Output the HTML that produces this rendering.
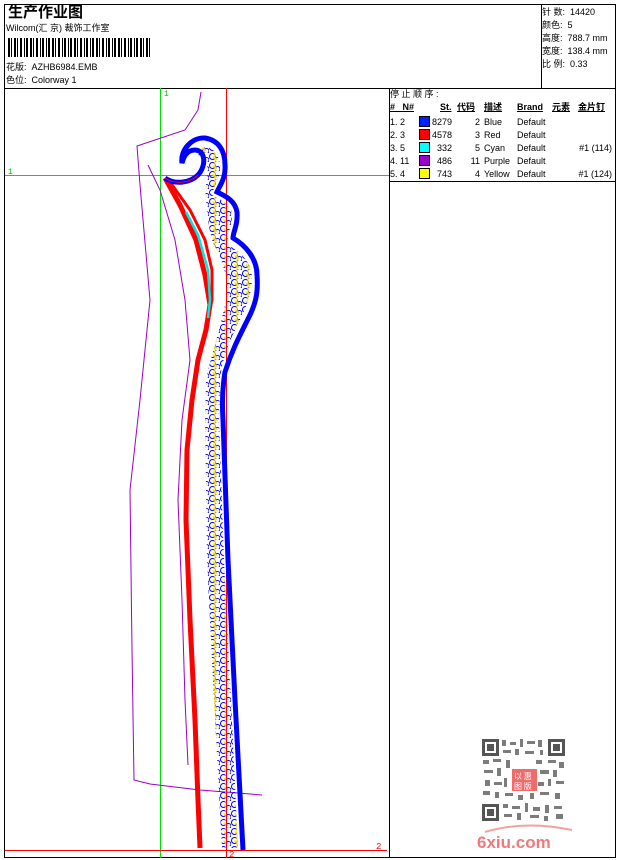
<!DOCTYPE html>
<html><head><meta charset="utf-8"><style>
body{margin:0;background:#fff;width:620px;height:860px;overflow:hidden;font-family:"Liberation Sans","Noto Sans CJK SC",sans-serif;color:#000}
.t{position:absolute;font-size:9px;white-space:nowrap;line-height:11px}
</style></head><body>
<svg width="620" height="860" style="position:absolute;left:0;top:0">
<defs>
<pattern id="lp" x="0" y="0" width="11" height="9" patternUnits="userSpaceOnUse">
<circle cx="3.5" cy="3.5" r="3" fill="none" stroke="#0000ff" stroke-width="1"/>
<circle cx="8.5" cy="7" r="2.5" fill="none" stroke="#0000ff" stroke-width="1"/>
<path d="M3.5,3.5 L8.5,7 M6,0 L6,9" stroke="#ffe600" stroke-width="1.2"/>
</pattern>
</defs>
<rect x="4.5" y="4.5" width="611" height="853" fill="none" stroke="#000"/>
<line x1="4" y1="88.5" x2="616" y2="88.5" stroke="#000"/>
<line x1="541.5" y1="4" x2="541.5" y2="88" stroke="#000"/>
<line x1="389.5" y1="88" x2="389.5" y2="858" stroke="#000"/>
<line x1="389" y1="181.5" x2="616" y2="181.5" stroke="#000"/>
<g fill="#000">
<rect x="8" y="38" width="2" height="19"/><rect x="11" y="38" width="1" height="19"/><rect x="14" y="38" width="2" height="19"/><rect x="17" y="38" width="1" height="19"/><rect x="20" y="38" width="2" height="19"/><rect x="24" y="38" width="1" height="19"/><rect x="26" y="38" width="2" height="19"/><rect x="30" y="38" width="2" height="19"/><rect x="33" y="38" width="1" height="19"/><rect x="36" y="38" width="2" height="19"/><rect x="40" y="38" width="1" height="19"/><rect x="42" y="38" width="2" height="19"/><rect x="46" y="38" width="1" height="19"/><rect x="48" y="38" width="2" height="19"/><rect x="52" y="38" width="2" height="19"/><rect x="55" y="38" width="1" height="19"/><rect x="58" y="38" width="2" height="19"/><rect x="62" y="38" width="1" height="19"/><rect x="64" y="38" width="2" height="19"/><rect x="68" y="38" width="1" height="19"/><rect x="70" y="38" width="2" height="19"/><rect x="74" y="38" width="2" height="19"/><rect x="77" y="38" width="1" height="19"/><rect x="80" y="38" width="2" height="19"/><rect x="84" y="38" width="1" height="19"/><rect x="86" y="38" width="2" height="19"/><rect x="90" y="38" width="1" height="19"/><rect x="92" y="38" width="2" height="19"/><rect x="96" y="38" width="2" height="19"/><rect x="99" y="38" width="1" height="19"/><rect x="102" y="38" width="2" height="19"/><rect x="106" y="38" width="1" height="19"/><rect x="108" y="38" width="2" height="19"/><rect x="112" y="38" width="1" height="19"/><rect x="114" y="38" width="2" height="19"/><rect x="118" y="38" width="2" height="19"/><rect x="121" y="38" width="1" height="19"/><rect x="124" y="38" width="2" height="19"/><rect x="128" y="38" width="1" height="19"/><rect x="130" y="38" width="2" height="19"/><rect x="134" y="38" width="1" height="19"/><rect x="136" y="38" width="2" height="19"/><rect x="140" y="38" width="2" height="19"/><rect x="143" y="38" width="1" height="19"/><rect x="146" y="38" width="2" height="19"/><rect x="149" y="38" width="1" height="19"/>
</g>
<line x1="160.5" y1="88" x2="160.5" y2="858" stroke="#00e000"/>
<line x1="5" y1="175.5" x2="389" y2="175.5" stroke="#00e000"/>
<line x1="5" y1="850.5" x2="387" y2="850.5" stroke="#f00"/>
<text x="164" y="96" font-size="8" fill="#00c000" font-family="Liberation Mono">1</text>
<text x="8" y="174" font-size="8" fill="#00c000" font-family="Liberation Mono">1</text>
<text x="376" y="849" font-size="9" fill="#f00" font-family="Liberation Mono">2</text>
<text x="229" y="857" font-size="9" fill="#f00" font-family="Liberation Mono">2</text>
<path d="M201,92 L198,110 L185,130 L137,146 L140,185 L150,300 L140,400 L130,490 L132,650 L134,780 L150,784 L200,790 L262,795" fill="none" stroke="#9900cc" stroke-width="1"/>
<path d="M148,165 L160,190 L175,240 L185,300 L190,360 L182,420 L178,500 L182,600 L185,700 L188,765" fill="none" stroke="#9900cc" stroke-width="1"/>
<!-- loops fill regions -->
<path d="M195,152 C205,142 218,148 220,165 C221,180 212,190 212,195 C222,200 232,205 232,215 C232,228 226,235 228,245 C240,252 252,262 252,278 C252,295 245,310 236,328 C228,345 222,360 220,380 L219,420 L224,560 L231,700 L238,848 L222,848 L214,700 L207,560 L205,420 L206,380 C210,360 220,330 226,300 C230,280 222,260 214,245 C208,230 208,215 206,200 C204,185 210,172 206,162 Z" fill="url(#lp)"/>
<path d="M165,178 L180,205 L196,240 L205,275 L210,305 L206,330 L198,360 L192,400 L187,450 L186,520 L190,620 L195,720 L198,800 L200,848" fill="none" stroke="#f00" stroke-width="5"/>
<path d="M170,182 L190,210 L205,240 L212,270 L212,300 L208,318" fill="none" stroke="#f00" stroke-width="3"/>
<path d="M186,212 L198,235 L208,270 L210,300 L208,318" fill="none" stroke="#00e5e5" stroke-width="2.5"/>
<line x1="226.5" y1="88" x2="226.5" y2="858" stroke="#f00"/>
<path d="M165,178 C175,185 190,183 198,175 C207,165 205,150 195,150 C185,150 183,160 182,163 C180,150 192,137 205,138 C218,140 225,150 225,165 C226,178 220,185 217,192 C225,196 235,200 237,212 C238,225 233,232 233,238 C245,245 257,258 257,275 C258,290 257,300 250,315 C240,335 232,350 225,372 C222,390 222,405 223,420 L228,560 L235,700 L243,850" fill="none" stroke="#0000ff" stroke-width="5"/>
<path d="M165,178 C175,185 190,183 198,175" fill="none" stroke="#f00" stroke-width="1"/>
<!-- QR -->
<g fill="#555">
<rect x="482" y="739" width="17" height="17"/><rect x="548" y="739" width="17" height="17"/><rect x="482" y="804" width="17" height="17"/>
</g>
<g fill="#fff"><rect x="485" y="742" width="11" height="11"/><rect x="551" y="742" width="11" height="11"/><rect x="485" y="807" width="11" height="11"/></g>
<g fill="#555"><rect x="487" y="744" width="7" height="7"/><rect x="553" y="744" width="7" height="7"/><rect x="487" y="809" width="7" height="7"/></g>
<g fill="#666" opacity="0.85">
<rect x="502" y="740" width="4" height="6"/><rect x="510" y="742" width="6" height="3"/><rect x="520" y="739" width="3" height="8"/><rect x="527" y="741" width="8" height="3"/><rect x="538" y="740" width="4" height="7"/>
<rect x="503" y="750" width="8" height="3"/><rect x="515" y="749" width="4" height="6"/><rect x="525" y="751" width="9" height="3"/><rect x="540" y="750" width="3" height="5"/>
<rect x="483" y="760" width="6" height="4"/><rect x="493" y="759" width="8" height="3"/><rect x="506" y="760" width="4" height="8"/><rect x="536" y="760" width="6" height="4"/><rect x="548" y="760" width="8" height="3"/><rect x="559" y="762" width="5" height="6"/>
<rect x="484" y="770" width="9" height="3"/><rect x="497" y="768" width="4" height="8"/><rect x="540" y="770" width="9" height="4"/><rect x="553" y="770" width="4" height="7"/>
<rect x="485" y="780" width="5" height="6"/><rect x="494" y="782" width="8" height="3"/><rect x="504" y="778" width="3" height="9"/><rect x="538" y="782" width="6" height="4"/><rect x="548" y="779" width="3" height="7"/><rect x="556" y="781" width="8" height="3"/>
<rect x="483" y="791" width="7" height="4"/><rect x="495" y="792" width="4" height="6"/><rect x="505" y="793" width="8" height="3"/><rect x="518" y="795" width="5" height="5"/><rect x="530" y="793" width="4" height="6"/><rect x="540" y="792" width="9" height="3"/><rect x="555" y="793" width="5" height="6"/>
<rect x="503" y="804" width="5" height="4"/><rect x="512" y="806" width="8" height="3"/><rect x="525" y="803" width="3" height="9"/><rect x="533" y="807" width="7" height="4"/><rect x="545" y="805" width="4" height="8"/><rect x="554" y="806" width="8" height="3"/>
<rect x="504" y="814" width="8" height="3"/><rect x="517" y="813" width="4" height="7"/><rect x="530" y="815" width="9" height="3"/><rect x="544" y="816" width="4" height="5"/><rect x="556" y="814" width="7" height="5"/>
</g>
<rect x="512" y="769" width="25" height="22" fill="#f26b6b"/>
<text x="514" y="779" font-size="8" fill="#fff" font-family="Noto Sans CJK SC">以 惠</text>
<text x="514" y="789" font-size="8" fill="#fff" font-family="Noto Sans CJK SC">图 版</text>
<path d="M485,832 Q525,820 572,830" fill="none" stroke="#f4a0a0" stroke-width="2"/>
<text x="477" y="848" font-size="17" font-weight="bold" fill="#f07a7a" font-family="Liberation Sans">6xiu.com</text>
</svg>
<div class="t" style="left:8px;top:3px;font-size:15px;font-weight:bold;line-height:18px;font-family:'Noto Sans CJK SC',sans-serif">生产作业图</div>
<div class="t" style="left:6px;top:23px">Wilcom(汇 京) 裁饰工作室</div>
<div class="t" style="left:6px;top:62px">花版:&nbsp; AZHB6984.EMB</div>
<div class="t" style="left:6px;top:75px">色位:&nbsp; Colorway 1</div>
<div class="t" style="left:542px;top:6px;line-height:13px">针 数:&nbsp; 14420<br>颜色:&nbsp; 5<br>高度:&nbsp; 788.7 mm<br>宽度:&nbsp; 138.4 mm<br>比 例:&nbsp; 0.33</div>
<div class="t" style="left:390px;top:89px">停 止 顺 序 :</div>
<div class="t" style="left:390px;top:102px;font-weight:bold;text-decoration:underline">#&nbsp;&nbsp; N#</div>
<div class="t" style="left:440px;top:102px;font-weight:bold;text-decoration:underline">St.</div>
<div class="t" style="left:457px;top:102px;font-weight:bold;text-decoration:underline">代码</div>
<div class="t" style="left:484px;top:102px;font-weight:bold;text-decoration:underline">描述</div>
<div class="t" style="left:517px;top:102px;font-weight:bold;text-decoration:underline">Brand</div>
<div class="t" style="left:552px;top:102px;font-weight:bold;text-decoration:underline">元素</div>
<div class="t" style="left:578px;top:102px;font-weight:bold;text-decoration:underline">金片钉</div>
<div style="position:absolute;left:419px;top:116px;width:9px;height:9px;background:#0020ff;border:1px solid #000"></div>
<div style="position:absolute;left:419px;top:129px;width:9px;height:9px;background:#f00;border:1px solid #000"></div>
<div style="position:absolute;left:419px;top:142px;width:9px;height:9px;background:#00ffff;border:1px solid #000"></div>
<div style="position:absolute;left:419px;top:155px;width:9px;height:9px;background:#9900cc;border:1px solid #000"></div>
<div style="position:absolute;left:419px;top:168px;width:9px;height:9px;background:#ffff00;border:1px solid #000"></div>
<div class="t" style="left:390px;top:116px;line-height:13px">1. 2<br>2. 3<br>3. 5<br>4. 11<br>5. 4</div>
<div class="t" style="left:432px;top:116px;line-height:13px;width:20px;text-align:right">8279<br>4578<br>332<br>486<br>743</div>
<div class="t" style="left:462px;top:116px;line-height:13px;width:18px;text-align:right">2<br>3<br>5<br>11<br>4</div>
<div class="t" style="left:484px;top:116px;line-height:13px">Blue<br>Red<br>Cyan<br>Purple<br>Yellow</div>
<div class="t" style="left:517px;top:116px;line-height:13px">Default<br>Default<br>Default<br>Default<br>Default</div>
<div class="t" style="left:560px;top:116px;line-height:13px;width:52px;text-align:right"><br><br>#1 (114)<br><br>#1 (124)</div>
</body></html>
